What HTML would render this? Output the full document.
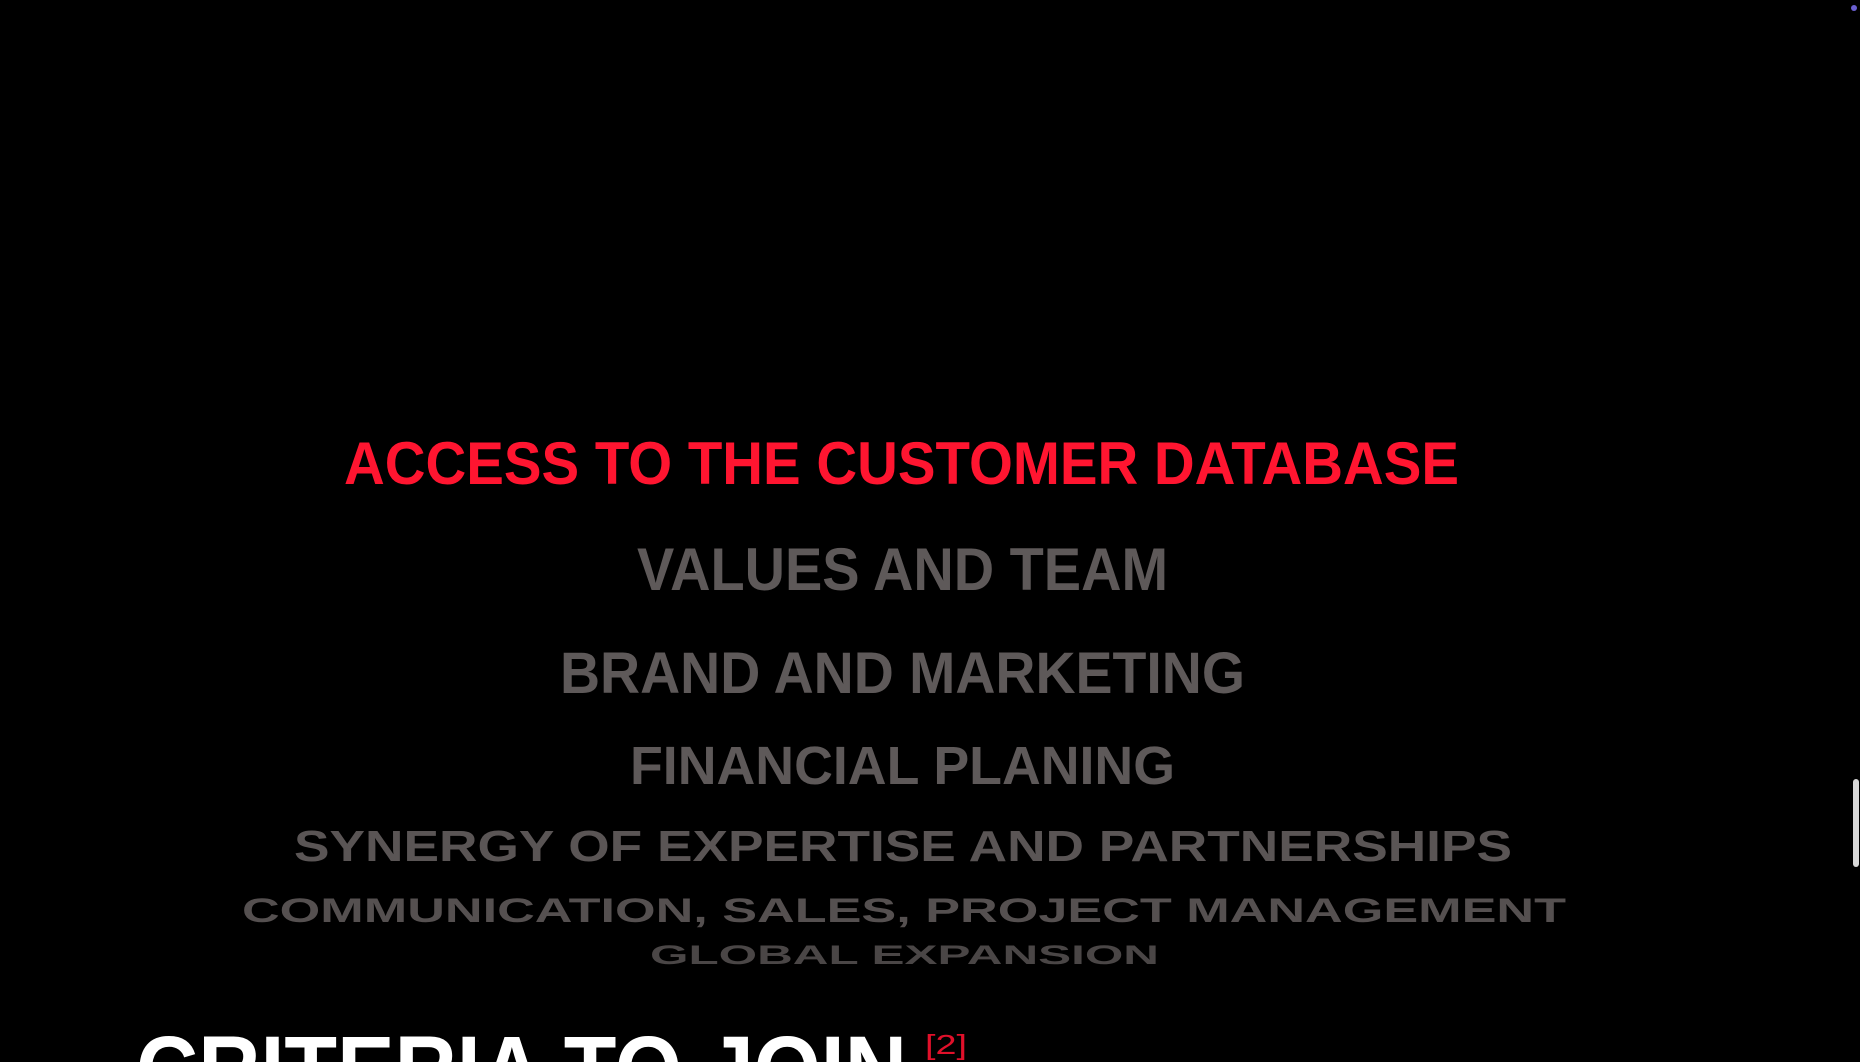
<!DOCTYPE html>
<html><head><meta charset="utf-8"><style>
html,body{margin:0;padding:0;background:#000;width:1860px;height:1062px;overflow:hidden}
svg{display:block}
</style></head><body>
<svg width="1860" height="1062" xmlns="http://www.w3.org/2000/svg" font-family="Liberation Sans, Arial, sans-serif" font-weight="bold">
<rect width="1860" height="1062" fill="#000"/>
<circle cx="1854" cy="8" r="3" fill="#6a5fd0"/>
<rect x="1853" y="779" width="6" height="88" rx="3" fill="#d8d8d8"/>
<text x="344" y="484" font-size="60" fill="#ff1530" textLength="1115" lengthAdjust="spacingAndGlyphs">ACCESS TO THE CUSTOMER DATABASE</text>
<text x="637" y="590" font-size="60" fill="#5e5959" textLength="531" lengthAdjust="spacingAndGlyphs">VALUES AND TEAM</text>
<text x="560" y="693" font-size="58" fill="#5e5959" textLength="685" lengthAdjust="spacingAndGlyphs">BRAND AND MARKETING</text>
<text x="630" y="784" font-size="54" fill="#5e5959" textLength="545" lengthAdjust="spacingAndGlyphs">FINANCIAL PLANING</text>
<text x="294" y="861" font-size="44" fill="#5a5555" textLength="1218" lengthAdjust="spacingAndGlyphs">SYNERGY OF EXPERTISE AND PARTNERSHIPS</text>
<text x="242" y="922" font-size="34" fill="#555050" textLength="1324" lengthAdjust="spacingAndGlyphs">COMMUNICATION, SALES, PROJECT MANAGEMENT</text>
<text x="650" y="964" font-size="27" fill="#4a4646" textLength="509" lengthAdjust="spacingAndGlyphs">GLOBAL EXPANSION</text>
<text x="136" y="1102" font-size="95" fill="#ffffff" textLength="771" lengthAdjust="spacingAndGlyphs">CRITERIA TO JOIN</text>
<text x="925" y="1054" font-size="28" font-weight="normal" fill="#e0102a" textLength="42" lengthAdjust="spacingAndGlyphs">[2]</text>
</svg>
</body></html>
